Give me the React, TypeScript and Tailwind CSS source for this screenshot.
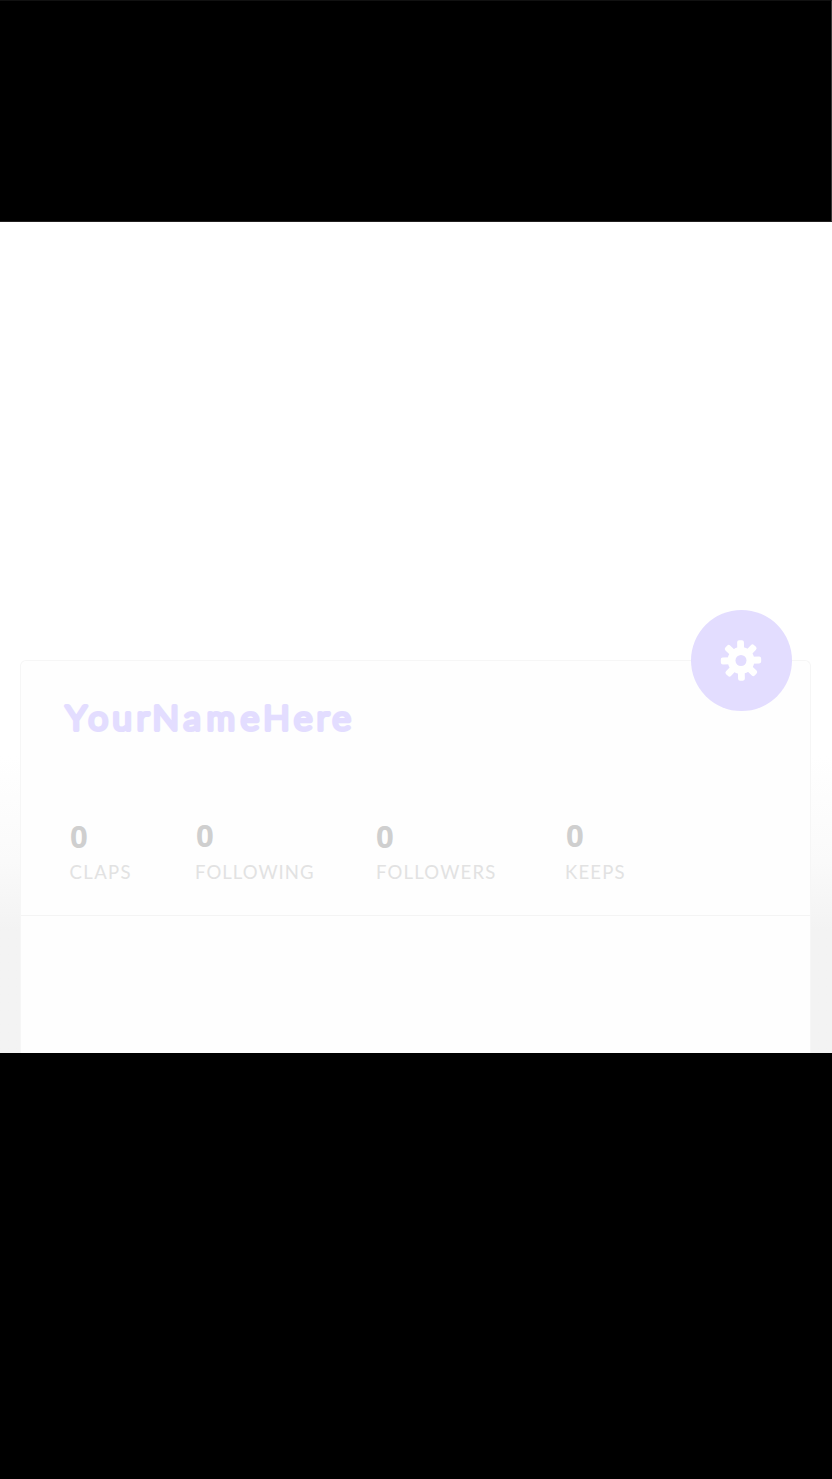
import React from "react";

const teeth = [0, 45, 90, 135, 180, 225, 270, 315];

function Gear() {
  return (
    <svg width="42" height="42" viewBox="-21 -21 42 42" className="mr-[1px]" aria-hidden="true">
      <g fill="#ffffff" transform="translate(0 -0.5) rotate(-1.5)">
        {teeth.map((angle) => (
          <rect key={angle} x="-3.4" y="-20.2" width="6.8" height="12" rx="2" transform={`rotate(${angle})`} />
        ))}
        <circle r="13.4" />
      </g>
      <circle cy="-0.5" r="5.5" fill="#e3ddff" />
    </svg>
  );
}

function Wordmark() {
  return (
    <svg width="300" height="40" viewBox="0 0 300 40" className="overflow-visible">
      <text
        x="0.8 22.2 44.9 67.6 82.6 112 133.8 165.8 187.1 216 237.6 252.3"
        y="28.7"
        transform="scale(1.06 1)"
        fill="#e3ddff"
        stroke="#e3ddff"
        strokeWidth="4.2"
        strokeLinejoin="round"
        className="font-['Lato',sans-serif] text-[33px] font-light"
      >
        YourNameHere
      </text>
    </svg>
  );
}

function Stat({ value, label, className, valueClass, labelClass }: {
  value: string;
  label: string;
  className: string;
  valueClass: string;
  labelClass: string;
}) {
  return (
    <div className={`flex shrink-0 flex-col items-start whitespace-nowrap ${className}`}>
      <span className={`h-[41px] font-['Open_Sans',sans-serif] text-[31px] leading-[26px] font-bold text-[#cfcfcf] ${valueClass}`}>{value}</span>
      <span className={`font-['Lato',sans-serif] text-[18.5px] leading-[18px] text-[#e2e2e2] ${labelClass}`}>{label}</span>
    </div>
  );
}

export default function App() {
  return (
    <main className="flex h-[1479px] w-[832px] flex-col overflow-hidden bg-black">
      <header className="h-[222px] shrink-0 border-t border-r border-b border-t-[#111111] border-r-[#393737] border-b-[#222020] bg-black" />
      <section className="h-[831px] shrink-0 bg-linear-to-b from-white from-[534px] via-[#fafafa] via-[640px] to-[#f3f3f3] to-[708px] pt-[438px] pr-[21px] pl-[20px]">
        <div className="relative flex h-[393px] flex-col rounded-t-[6px] border-x border-t border-[#f6f6f6] bg-[#fefefe]">
          <button aria-label="Settings" className="absolute top-[-51px] right-[18px] flex size-[101px] items-center justify-center rounded-full bg-[#e3ddff]">
            <Gear />
          </button>
          <div className="flex h-[255px] shrink-0 flex-col border-b border-[#f4f4f4]">
            <h1 className="mt-[40px] ml-[44px] h-[40px]">
              <Wordmark />
            </h1>
            <div className="mt-[81px] ml-[48px] flex">
              <Stat value="0" label="CLAPS" className="w-[126px]" valueClass="pt-[1px] pl-[1px]" labelClass="pl-[0.5px] tracking-[1.4px]" />
              <Stat value="0" label="FOLLOWING" className="w-[181px]" valueClass="pl-[1px]" labelClass="tracking-[1.05px]" />
              <Stat value="0" label="FOLLOWERS" className="w-[189px]" valueClass="pt-[1px]" labelClass="tracking-[1.2px]" />
              <Stat value="0" label="KEEPS" className="w-[80px]" valueClass="pl-[1px]" labelClass="tracking-[1.2px]" />
            </div>
          </div>
          <div className="grow bg-[#fefefe]" />
        </div>
      </section>
      <footer className="grow bg-black" />
    </main>
  );
}
